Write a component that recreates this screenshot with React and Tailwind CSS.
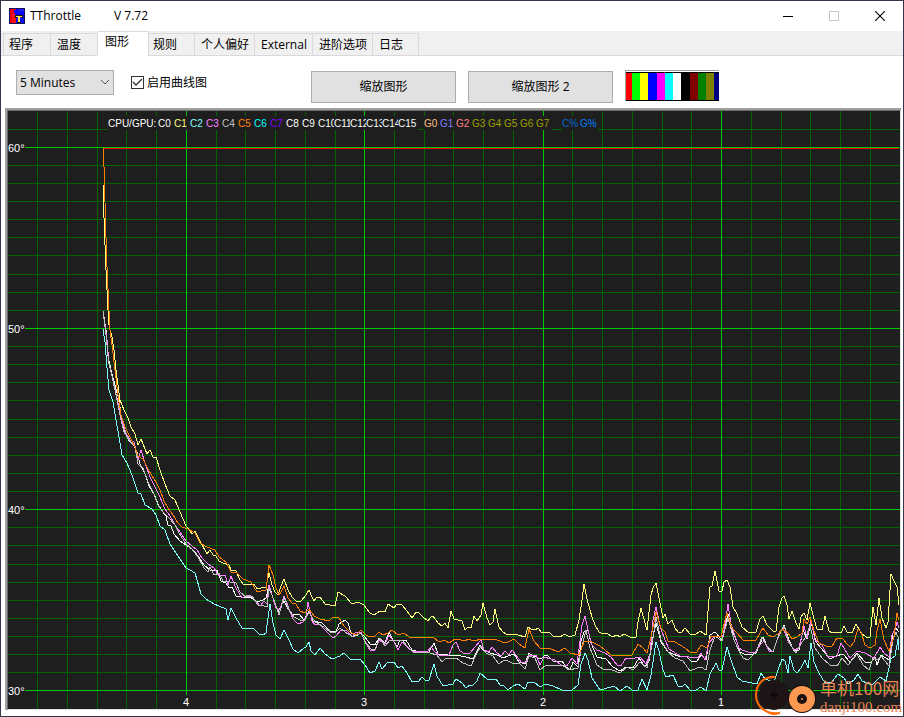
import { useState } from 'react';
import clsx from 'clsx';

const tabs = [
  { id: 'program', label: '程序', size: 'w-12 pl-[5px]' },
  { id: 'temperature', label: '温度', size: 'w-[47px] pl-[6px]' },
  { id: 'graph', label: '图形', size: 'w-[51px] pl-[7px]' },
  { id: 'rules', label: '规则', size: 'w-[46px] pl-1' },
  { id: 'preferences', label: '个人偏好', size: 'w-[60px] pl-[6px]' },
  { id: 'external', label: 'External', size: 'w-[58px] pl-[6px]' },
  { id: 'advanced', label: '进阶选项', size: 'w-[60px] pl-[6px]' },
  { id: 'log', label: '日志', size: 'w-[46px] pl-[6px]' },
];

const swatches = [
  'w-[6px] bg-[#ff0000]',
  'w-[8px] bg-[#00ff00]',
  'w-[8px] bg-[#ffff00]',
  'w-[9px] bg-[#0000ff]',
  'w-[8px] bg-[#ff00ff]',
  'w-[8px] bg-[#00ffff]',
  'w-[8px] bg-white',
  'w-[9px] bg-black',
  'w-[8px] bg-[#800000]',
  'w-[8px] bg-[#008000]',
  'w-[8px] bg-[#808000]',
  'w-[5px] bg-[#000080]',
];

const legend = [
  { x: 108, w: 50, label: 'CPU/GPU:', color: '#ffffff' },
  { x: 158, label: 'C0', color: '#ffffff' },
  { x: 174, label: 'C1', color: '#ffff80' },
  { x: 190, label: 'C2', color: '#80ffff' },
  { x: 206, label: 'C3', color: '#ff80ff' },
  { x: 222, label: 'C4', color: '#c0c0c0' },
  { x: 238, label: 'C5', color: '#ff8000' },
  { x: 254, label: 'C6', color: '#00ffff' },
  { x: 270, label: 'C7', color: '#8000ff' },
  { x: 286, label: 'C8', color: '#ffffff' },
  { x: 302, label: 'C9', color: '#ffffff' },
  { x: 318, label: 'C10', color: '#ffffff' },
  { x: 334, label: 'C11', color: '#ffffff' },
  { x: 350, label: 'C12', color: '#ffffff' },
  { x: 366, label: 'C13', color: '#ffffff' },
  { x: 382, label: 'C14', color: '#ffffff' },
  { x: 398, w: 20, label: 'C15', color: '#ffffff' },
  { x: 424, label: 'G0', color: '#ffc080' },
  { x: 440, label: 'G1', color: '#8080ff' },
  { x: 456, label: 'G2', color: '#ff8080' },
  { x: 472, label: 'G3', color: '#a0a000' },
  { x: 488, label: 'G4', color: '#a0a000' },
  { x: 504, label: 'G5', color: '#a0a000' },
  { x: 520, label: 'G6', color: '#a0a000' },
  { x: 536, label: 'G7', color: '#a0a000' },
  { x: 562, w: 18, label: 'C%', color: '#0068d0' },
  { x: 580, w: 18, label: 'G%', color: '#0080ff' },
];

// Temperature traces, one per core
const series = [
  {
    id: 'C0',
    color: '#ffffff',
    points:
      '103,311 106,330 108,356 111,370 115,385 119,400 122,422 126,435 129,441 133,443 137,452 140,464 145,474 149,486 154,494 158,504 162,511 166,516 168,525 171,526 174,534 180,541 186,545 192,549 198,556 204,565 210,570 217,570 221,581 226,583 229,588 232,587 236,596 242,597 250,597 257,602 263,600 266,598 269,585 273,598 278,612 281,606 284,601 288,609 293,615 299,614 304,620 309,611 313,621 322,623 330,631 336,632 339,624 345,620 348,623 351,633 356,636 361,633 365,637 370,644 375,645 379,638 385,643 389,632 393,640 397,647 400,640 406,640 412,650 420,652 429,652 434,643 438,654 448,655 456,655 466,657 473,659 480,645 483,650 490,653 497,655 503,658 508,656 514,654 519,662 525,664 529,653 533,656 541,659 545,655 548,656 553,661 562,661 566,667 570,670 573,662 578,667 581,641 584,632 588,630 591,643 597,657 606,659 613,667 620,671 626,667 633,668 639,658 645,667 649,661 653,637 656,623 661,642 668,652 678,656 687,657 692,662 697,661 701,655 706,660 710,635 715,632 722,640 728,614 732,630 737,642 740,652 744,654 750,655 756,653 763,637 768,648 773,652 778,637 784,625 789,640 794,651 799,650 803,630 807,639 811,622 816,642 821,648 830,659 836,656 843,654 850,662 857,653 865,662 871,662 875,657 877,665 881,655 889,660 893,633 896,628 899,632',
  },
  {
    id: 'C1',
    color: '#ffff80',
    points:
      '103,184 104,218 105,245 106,270 107,290 108,310 109,325 110,330 112,337 114,350 116,370 118,385 120,400 124,410 128,418 131,427 135,434 138,445 141,439 147,454 150,450 153,457 156,457 160,470 165,484 170,496 175,500 180,512 186,526 192,534 195,531 200,541 207,554 210,550 213,555 216,556 219,561 223,563 229,565 231,570 236,571 240,580 243,584 250,585 254,584 257,589 261,588 266,587 269,573 272,585 275,592 278,595 281,586 284,579 288,590 292,597 296,601 301,601 306,595 309,590 312,597 314,601 317,597 320,597 325,604 330,605 335,606 338,592 345,596 352,604 358,602 364,605 370,613 374,615 380,611 385,612 388,604 394,608 397,604 402,605 407,611 412,618 416,612 419,613 423,617 428,621 431,617 433,616 438,623 442,626 445,623 448,628 451,611 454,619 462,621 465,630 468,627 471,628 474,616 477,621 481,615 483,603 487,618 490,625 493,622 495,609 499,627 502,631 507,635 513,634 518,635 525,637 528,627 531,629 535,630 538,628 542,633 549,632 553,636 560,637 565,634 569,637 575,635 579,620 582,600 584,584 587,599 592,617 595,625 599,632 603,634 607,633 612,637 617,635 620,637 624,634 630,637 636,637 638,622 641,608 645,623 647,630 651,595 653,588 656,583 659,598 663,618 665,614 668,624 672,620 675,628 678,632 682,632 685,628 690,634 695,635 700,631 706,635 710,587 712,586 715,571 719,591 722,591 724,582 727,580 730,587 733,607 737,614 742,627 749,633 756,632 760,619 763,616 767,625 773,631 776,631 779,607 782,598 784,596 787,605 789,619 792,611 796,623 799,629 801,617 804,613 807,620 810,603 813,615 817,629 822,630 825,616 829,631 832,633 836,632 841,633 844,626 847,632 852,633 856,624 861,633 866,637 870,637 873,607 876,625 879,598 882,618 886,628 888,622 891,574 894,581 897,587 899,605',
  },
  {
    id: 'C2',
    color: '#80ffff',
    points:
      '103,329 105,342 107,368 109,390 113,402 116,420 119,437 122,455 127,463 132,475 138,493 141,494 145,505 152,509 156,515 160,526 165,530 170,544 180,559 186,568 190,570 195,573 201,594 206,599 214,604 226,609 228,620 231,608 236,618 242,628 254,629 259,634 263,635 266,633 268,618 270,604 273,623 276,635 280,639 284,630 289,640 293,649 298,653 304,648 306,647 309,642 311,651 315,655 320,648 325,654 332,659 340,656 344,653 350,659 360,659 365,665 370,673 375,671 379,662 382,669 388,662 394,662 398,668 402,666 407,673 412,682 419,681 422,677 426,681 429,680 434,664 437,676 443,686 453,684 456,679 462,683 466,688 470,685 473,685 477,681 480,673 487,679 496,679 500,685 503,685 508,690 513,686 518,684 525,689 528,682 534,682 540,687 545,684 553,686 562,690 572,690 578,685 581,664 585,653 588,660 592,678 600,690 611,687 614,686 620,691 627,686 632,690 638,690 642,679 647,690 651,675 656,642 659,651 663,670 666,677 673,675 678,686 682,687 685,684 690,690 696,690 701,687 706,691 710,674 716,663 719,670 722,670 727,647 731,660 737,677 742,681 747,682 757,684 761,673 765,679 774,682 778,670 782,659 785,661 788,673 790,656 794,670 797,673 801,668 805,660 808,668 811,643 814,662 819,673 825,683 832,682 838,674 844,678 848,684 854,680 858,674 862,681 872,685 880,677 886,681 891,659 895,656 898,639 899,650',
  },
  {
    id: 'C3',
    color: '#ff80ff',
    points:
      '103,311 105,325 107,340 109,364 113,380 117,398 121,418 126,433 130,440 134,442 138,460 141,450 145,463 150,477 155,487 160,497 165,509 170,516 175,525 180,532 186,541 192,546 197,550 202,558 208,564 214,568 219,576 225,575 228,585 231,576 236,588 242,598 246,596 250,595 254,599 260,606 264,601 267,604 269,585 272,595 276,608 280,610 284,596 288,606 293,619 298,624 303,622 306,617 308,602 312,621 315,625 319,624 325,630 333,638 336,636 341,630 347,631 352,637 356,632 361,632 365,642 370,650 375,650 379,640 385,644 389,635 394,642 398,650 402,642 406,646 412,651 422,651 428,651 431,647 435,652 439,655 449,655 453,645 456,642 460,651 465,654 470,653 475,647 481,640 484,650 489,652 492,647 497,653 501,656 505,651 509,655 512,650 516,655 521,662 526,663 529,655 536,655 540,665 544,657 551,659 555,660 561,665 567,666 572,658 577,664 580,641 582,625 585,616 588,630 592,645 597,650 605,653 611,657 617,665 621,666 626,658 635,658 640,657 646,664 650,654 653,620 656,607 660,626 665,640 669,649 680,656 698,658 701,653 705,660 709,643 715,636 722,641 725,624 728,604 731,624 735,636 739,648 742,650 748,652 755,653 760,645 764,641 769,651 773,652 777,640 783,627 788,641 794,650 799,648 804,626 807,638 811,620 815,640 822,645 828,657 837,656 841,643 845,650 850,658 857,651 865,653 874,658 880,647 884,653 889,657 892,635 895,630 897,622 899,628',
  },
  {
    id: 'C4',
    color: '#c0c0c0',
    points:
      '103,311 106,335 109,364 112,376 116,395 121,420 124,432 129,440 135,447 138,464 143,468 148,482 154,494 158,505 164,513 170,519 175,525 179,533 186,544 192,549 198,557 204,568 208,572 210,567 214,575 219,573 223,581 230,582 236,583 240,592 246,597 252,596 258,605 264,606 267,607 269,588 274,600 279,615 284,597 289,610 294,617 300,620 305,620 309,612 315,622 324,627 330,632 335,633 340,628 345,632 353,637 361,633 366,643 371,649 375,649 380,638 385,646 390,640 396,640 402,640 408,647 413,652 430,653 437,655 442,662 446,658 456,658 463,663 471,666 476,655 481,646 486,653 493,656 499,664 504,660 508,661 514,664 519,663 525,669 529,656 535,658 540,670 546,665 562,665 569,670 578,668 581,650 586,630 590,648 597,665 603,669 612,670 620,673 627,667 633,670 640,662 647,668 652,645 656,617 661,640 668,652 675,658 683,661 690,671 697,668 701,667 706,670 710,650 715,636 722,641 728,618 734,640 740,653 743,658 748,660 756,652 762,637 767,646 773,652 779,634 784,626 789,642 796,653 802,642 806,637 810,625 815,648 822,658 830,665 837,666 842,658 848,665 857,654 863,665 869,670 873,658 878,660 881,656 889,666 893,640 896,632 899,640',
  },
  {
    id: 'C5',
    color: '#ff8000',
    points:
      '103,148 103,165 104,167 105,202 106,238 107,267 108,289 109,311 110,330 112,345 115,370 118,395 121,415 125,427 130,437 135,447 138,456 143,459 147,467 152,476 156,482 160,490 164,501 168,508 173,515 178,523 182,527 188,529 195,533 200,543 207,547 215,550 219,557 226,562 231,572 237,573 243,579 251,582 257,592 261,591 266,590 269,565 273,575 276,588 279,595 281,592 284,586 288,598 292,603 296,604 300,611 305,613 309,609 314,616 320,619 329,621 333,617 339,618 344,626 350,632 356,635 361,630 366,635 370,637 375,636 379,632 383,635 388,633 392,630 398,635 404,633 409,637 433,637 439,642 445,640 449,643 455,639 461,640 465,641 468,639 474,641 481,639 488,640 495,639 502,642 508,642 514,639 519,644 525,648 529,629 534,641 540,648 549,648 558,652 565,648 570,653 579,655 584,642 590,641 600,646 605,650 611,655 632,655 638,644 643,648 647,653 651,637 656,612 661,628 665,632 668,641 675,642 685,648 691,653 697,652 701,645 707,648 711,636 717,636 721,637 725,620 727,613 732,628 737,633 743,640 748,641 756,640 760,633 763,628 768,635 773,637 778,634 782,629 788,633 792,639 797,637 802,633 804,619 807,624 810,617 814,631 819,643 826,646 832,646 837,638 843,639 847,644 850,647 854,642 858,629 861,632 865,645 870,648 875,645 877,631 880,619 884,640 889,651 892,642 894,636 897,613 899,620',
  },
];

const minorColumns = [37, 67, 97, 126, 156, 216, 245, 275, 305, 335, 394, 424, 453, 483, 513, 572, 602, 632, 662, 691, 751, 781, 810, 840, 870];
const minorRows = [129, 165, 183, 201, 219, 237, 255, 274, 292, 310, 346, 364, 382, 400, 419, 437, 455, 473, 491, 527, 545, 564, 582, 600, 618, 636, 654, 672];

const minuteMarks = [
  { x: 186, label: '4' },
  { x: 364, label: '3' },
  { x: 543, label: '2' },
  { x: 721, label: '1' },
];

const degreeMarks = [
  { y: 147, label: '60°' },
  { y: 328, label: '50°' },
  { y: 509, label: '40°' },
  { y: 690, label: '30°' },
];

function AppIcon() {
  return (
    <svg viewBox="0 0 16 16" className="size-4" shapeRendering="crispEdges" aria-hidden="true">
      <rect width="16" height="16" fill="#101060" />
      <rect x="1" y="1" width="14" height="14" fill="#0a0aff" />
      <path d="M1 1h6v1h-2v3h1v1h-2v9h-3z" fill="#e80010" />
      <path d="M3 6h3v4h1v5h-4z" fill="#ff1010" />
      <path d="M9 1h6v2h-4v1h-2z" fill="#2020e0" />
      <path d="M6 7h8v3h-2v-1h-1v5h1v1h-4v-1h1v-5h-1v1h-2z" fill="#202000" />
      <path d="M7 8h6v1h-2v5h-2v-5h-2z" fill="#ffe840" />
    </svg>
  );
}

function TitleBar() {
  return (
    <header className="flex h-[30px] items-center bg-white pl-2 text-xs">
      <AppIcon />
      <h1 className="ml-[5px] w-[84px]">TThrottle</h1>
      <span>V 7.72</span>
      <div className="ml-auto flex h-full">
        <button type="button" aria-label="Minimize" className="flex w-[46px] items-center justify-center">
          <svg viewBox="0 0 10 10" className="size-[10px]" shapeRendering="crispEdges">
            <rect y="5" width="10" height="1" fill="#000" />
          </svg>
        </button>
        <button type="button" aria-label="Maximize" disabled className="flex w-[46px] items-center justify-center">
          <span className="size-[10px] border border-[#c8c8c8]" />
        </button>
        <button type="button" aria-label="Close" className="flex w-[46px] items-center justify-center">
          <svg viewBox="0 0 10 10" className="size-[10px]">
            <path d="M0 0L10 10M10 0L0 10" stroke="#000" strokeWidth="1.1" />
          </svg>
        </button>
      </div>
    </header>
  );
}

function TabBar({ active, onChange }) {
  return (
    <div role="tablist" className="flex h-[25px] items-end border-b border-[#d9d9d9] bg-[#f0f0f0] pl-[2px]">
      {tabs.map((tab, i) => (
        <button
          key={tab.id}
          type="button"
          role="tab"
          aria-selected={tab.id === active}
          onClick={() => onChange(tab.id)}
          className={clsx(
            'shrink-0 border-t border-r border-[#d9d9d9] text-left text-xs whitespace-nowrap',
            tab.size,
            i === 0 && 'border-l',
            tab.id === active ? '-mb-px h-[25px] bg-white pb-1' : 'h-[22px]'
          )}
        >
          {tab.label}
        </button>
      ))}
    </div>
  );
}

function Toolbar() {
  const [range, setRange] = useState('5');
  const [enabled, setEnabled] = useState(true);

  return (
    <div className="flex h-[52px] items-start bg-white pt-[14px] pl-[15px] text-xs">
      <div className="relative">
        <select
          aria-label="Time range"
          value={range}
          onChange={(e) => setRange(e.target.value)}
          className="h-[25px] w-[98px] appearance-none border border-[#adadad] bg-[#e1e1e1] pl-[3px]"
        >
          <option value="5">5 Minutes</option>
          <option value="10">10 Minutes</option>
          <option value="30">30 Minutes</option>
        </select>
        <svg viewBox="0 0 8 5" className="pointer-events-none absolute top-[10px] right-[5px] h-[5px] w-2">
          <path d="M0 0L4 4L8 0" fill="none" stroke="#555" />
        </svg>
      </div>

      <label className="ml-[17px] flex h-[25px] items-center gap-[3px]">
        <span className="relative flex">
          <input
            type="checkbox"
            checked={enabled}
            onChange={(e) => setEnabled(e.target.checked)}
            className="size-[13px] appearance-none border border-[#333] bg-white"
          />
          {enabled && (
            <svg viewBox="0 0 13 13" className="pointer-events-none absolute inset-0 size-[13px]">
              <path d="M2 6L5 9L11 3" fill="none" stroke="#333" strokeWidth="1.3" />
            </svg>
          )}
        </span>
        启用曲线图
      </label>

      <div className="ml-[104px] flex gap-3 pt-px">
        <button type="button" className="h-8 w-[145px] border border-[#adadad] bg-[#e1e1e1]">
          缩放图形
        </button>
        <button type="button" className="h-8 w-[145px] border border-[#adadad] bg-[#e1e1e1]">
          缩放图形 2
        </button>
      </div>

      <div className="ml-3 border-t border-l border-[#a0a0a0] pt-px">
        <div className="flex h-[29px] border-y border-black">
          {swatches.map((s) => (
            <span key={s} className={s} />
          ))}
        </div>
      </div>
    </div>
  );
}

function TemperatureChart() {
  return (
    <svg
      viewBox="8 111 892 598"
      className="block h-auto w-full bg-[#1e1e1e] font-['Liberation_Sans',Arial,sans-serif] text-[11px]"
      role="img"
      aria-label="CPU/GPU"
    >
      <g shapeRendering="crispEdges">
        <g fill="#006400">
          {minorColumns.map((x) => (
            <rect key={x} x={x} y="111" width="1" height="598" />
          ))}
          {minorRows.map((y) => (
            <rect key={y} x="8" y={y} width="892" height="1" />
          ))}
        </g>
        <g fill="#00c800">
          {minuteMarks.map((m) => (
            <rect key={m.x} x={m.x} y="111" width="1" height="584" />
          ))}
          {degreeMarks.map((m) => (
            <rect key={m.y} x="25" y={m.y} width="875" height="1" />
          ))}
        </g>
        {series.map((s) => (
          <polyline key={s.id} points={s.points} fill="none" stroke={s.color} strokeWidth="1" />
        ))}
        <rect x="104" y="148" width="795" height="1" fill="#ff0000" />
      </g>

      {/* each label paints its own background, so long ones are cut by the next */}
      <g className="text-[10px]">
        {legend.map((item) => (
          <g key={item.label}>
            <rect x={item.x} y="116" width={item.w || 16} height="14" fill="#1e1e1e" />
            <text x={item.x} y="127" fill={item.color}>
              {item.label}
            </text>
          </g>
        ))}
      </g>

      <g fill="#fff">
        {degreeMarks.map((m) => (
          <text key={m.y} x="8" y={m.y + 5}>
            {m.label}
          </text>
        ))}
        {minuteMarks.map((m) => (
          <text key={m.x} x={m.x} y="706" textAnchor="middle">
            {m.label}
          </text>
        ))}
      </g>
    </svg>
  );
}

function SiteMark() {
  return (
    <div className="absolute right-0 bottom-0 flex items-end">
      <svg viewBox="0 0 66 44" className="h-[44px] w-[66px]" aria-hidden="true">
        <circle cx="20" cy="23" r="15" fill="#1e1416" />
        <path d="M20 19v8M16 23h8" stroke="#000" strokeWidth="1" />
        <path d="M21 5C8 4 2 14 2 23C2 34 11 43 26 41" fill="none" stroke="#ff6a00" strokeWidth="2" />
        <path d="M12 7C16 3 21 3 22 6C19 6 16 6 12 7z" fill="#ff6a00" />
        <path d="M10 38C15 42 22 43 27 39C25 44 16 45 10 38z" fill="#ff6a00" />
        <circle cx="48" cy="27" r="14" fill="#1a1010" />
        <circle cx="48" cy="27" r="13" fill="#ff9850" />
        <circle cx="48" cy="27" r="5" fill="#1a1010" />
        <circle cx="48" cy="27" r="1" fill="#ff9850" />
      </svg>
      <div className="w-[83px] whitespace-nowrap text-[#e88455]">
        <div className="font-['Noto_Sans_CJK_SC',sans-serif] text-[17px] leading-5">单机100网</div>
        <div className="font-['Liberation_Serif',serif] text-[15px] leading-[18px]">danji100.com</div>
      </div>
    </div>
  );
}

export default function App() {
  const [tab, setTab] = useState('graph');

  return (
    <div className="bg-[#34394a] p-px font-['Open_Sans','Noto_Sans_CJK_SC',sans-serif] text-black">
      <main className="relative bg-white">
        <TitleBar />
        <TabBar active={tab} onChange={setTab} />
        <Toolbar />
        <section className="pr-[2px] pb-[6px] pl-1">
          <div className="border-t-2 border-l-2 border-[#a0a0a0]">
            <div className="border border-t-[#696969] border-r-[#e3e3e3] border-b-[#e3e3e3] border-l-[#696969]">
              <TemperatureChart />
            </div>
          </div>
        </section>
        <SiteMark />
      </main>
    </div>
  );
}
